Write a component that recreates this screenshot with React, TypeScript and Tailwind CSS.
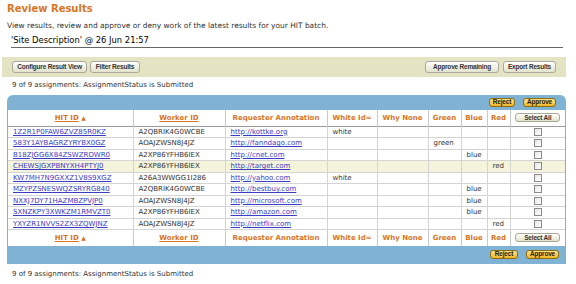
import React from 'react';

const font = { fontFamily: '"DejaVu Sans", Verdana, sans-serif' };
const btnFont = { fontFamily: '"Liberation Sans", Arial, sans-serif' };

type Row = {
  hit: string;
  worker: string;
  url: string;
  white?: string;
  green?: string;
  blue?: string;
  red?: string;
  hl?: boolean;
};

const rows: Row[] = [
  { hit: '1Z2R1P0FAW6ZVZ85R0KZ', worker: 'A2QBRIK4G0WCBE', url: 'http://kottke.org', white: 'white' },
  { hit: '583Y1AYBAGRZYRYBX0GZ', worker: 'AOAJZWSN8J4JZ', url: 'http://fanndago.com', green: 'green' },
  { hit: 'B18ZJGG6X84ZSWZRDWR0', worker: 'A2XP86YFHB6IEX', url: 'http://cnet.com', blue: 'blue' },
  { hit: 'CHEWSJGXPBNYXH4PTYJ0', worker: 'A2XP86YFHB6IEX', url: 'http://target.com', red: 'red', hl: true },
  { hit: 'KW7MH7N9GXXZ1V8S9XGZ', worker: 'A26A3WWGG1I286', url: 'http://yahoo.com', white: 'white' },
  { hit: 'MZYPZSNESWQZSRYRG840', worker: 'A2QBRIK4G0WCBE', url: 'http://bestbuy.com', blue: 'blue' },
  { hit: 'NXXJ7DY71HAZMBZPVJP0', worker: 'AOAJZWSN8J4JZ', url: 'http://microsoft.com', blue: 'blue' },
  { hit: 'SXNZKPY3XWKZM1RMVZT0', worker: 'A2XP86YFHB6IEX', url: 'http://amazon.com', blue: 'blue' },
  { hit: 'YXYZR1NVVS2ZX3ZQWJNZ', worker: 'AOAJZWSN8J4JZ', url: 'http://netflix.com', red: 'red' },
];

function GrayButton({ children, className = '' }: { children: React.ReactNode; className?: string }) {
  return (
    <span
      style={btnFont}
      className={`flex items-center justify-center whitespace-nowrap tracking-[-0.2px] rounded-[3px] border border-[#a9a99a] bg-gradient-to-b from-white to-[#e2e2cc] font-bold text-[#333] ${className}`}
    >
      {children}
    </span>
  );
}

function GoldButton({ children, className = '' }: { children: React.ReactNode; className?: string }) {
  return (
    <span
      style={btnFont}
      className={`flex items-center justify-center whitespace-nowrap tracking-[-0.2px] rounded-[3px] border border-[#8c6d10] bg-gradient-to-b from-[#ffe58a] to-[#eeb520] font-bold text-[#2a2000] text-[6.5px] leading-none ${className}`}
    >
      {children}
    </span>
  );
}

function HeaderRow({ top }: { top?: boolean }) {
  const th = 'border-r border-[#c9c9c9] text-center font-bold text-[#d9751f] text-[7px] p-0';
  return (
    <tr className={`h-[16px] bg-white ${top ? 'border-b border-[#9a9a9a]' : 'border-t border-[#9a9a9a]'}`}>
      <th className={th}><span className="underline">HIT ID</span> <span className="text-[6px]">▲</span></th>
      <th className={th}><span className="underline">Worker ID</span></th>
      <th className={th}>Requester Annotation</th>
      <th className={th}>White Id=</th>
      <th className={th}>Why None</th>
      <th className={th}>Green</th>
      <th className={th}>Blue</th>
      <th className={th}>Red</th>
      <th className="p-0">
        <GrayButton className="mx-auto h-[9px] w-[45px] text-[6.5px] leading-none">Select All</GrayButton>
      </th>
    </tr>
  );
}

export default function App() {
  const td = 'border-r border-[#d4d4d4] px-[5px] p-0 text-[7px] leading-[10px] text-[#333] whitespace-nowrap overflow-hidden';
  return (
    <div style={font} className="w-[576px] h-[284px] overflow-hidden bg-white text-[#333]">
      <div className="pl-[7px] pt-[2px] text-[10px] leading-[13px] font-bold text-[#d9751f]">Review Results</div>
      <div className="pl-[7px] mt-[6px] text-[7.45px] leading-[9px]">
        View results, review and approve or deny work of the latest results for your HIT batch.
      </div>
      <div className="ml-[11px] mr-[13px] mt-[4px] border-b border-[#666] text-[8.4px] leading-[12px] text-black pb-[1px]">
        'Site Description' @ 26 Jun 21:57
      </div>
      <div className="mx-[2px] mt-[9px] mr-[10px] h-[20px] bg-[#e4e4c4] flex items-center justify-between px-[10px]">
        <div className="flex gap-[3px]">
          <GrayButton className="h-[12px] w-[75px] text-[6.5px] leading-none">Configure Result View</GrayButton>
          <GrayButton className="h-[12px] w-[50px] text-[6.5px] leading-none">Filter Results</GrayButton>
        </div>
        <div className="flex gap-[4px]">
          <GrayButton className="h-[12px] w-[74px] text-[6.5px] leading-none">Approve Remaining</GrayButton>
          <GrayButton className="h-[12px] w-[53px] text-[6.5px] leading-none">Export Results</GrayButton>
        </div>
      </div>
      <div className="pl-[12px] mt-[4px] text-[7px] leading-[9px]">9 of 9 assignments: AssignmentStatus is Submitted</div>

      <div className="ml-[7px] mt-[5px] w-[559px] rounded-t-[6px] bg-[#80b3d3] px-[1px]">
        <div className="h-[15px] flex items-center justify-end gap-[8px] pr-[9px]">
          <GoldButton className="h-[9px] w-[26px]">Reject</GoldButton>
          <GoldButton className="h-[9px] w-[33px]">Approve</GoldButton>
        </div>
        <table className="w-full table-fixed border-collapse bg-white">
          <colgroup>
            <col className="w-[125px]" />
            <col className="w-[92px]" />
            <col className="w-[102px]" />
            <col className="w-[50px]" />
            <col className="w-[51px]" />
            <col className="w-[33px]" />
            <col className="w-[26px]" />
            <col className="w-[23px]" />
            <col className="w-[55px]" />
          </colgroup>
          <thead>
            <HeaderRow top />
          </thead>
          <tbody>
            {rows.map((r) => (
              <tr key={r.hit} className={`h-[11.5px] border-b border-[#d4d4d4] ${r.hl ? 'bg-[#f4f4dc]' : ''}`}>
                <td className={td}><a className="text-[#3b3bc4] underline">{r.hit}</a></td>
                <td className={td}>{r.worker}</td>
                <td className={td}><a className="text-[#3b3bc4] underline">{r.url}</a></td>
                <td className={td}>{r.white}</td>
                <td className={td}></td>
                <td className={td}>{r.green}</td>
                <td className={td}>{r.blue}</td>
                <td className={td}>{r.red}</td>
                <td className="p-0">
                  <span className="mx-auto block h-[8px] w-[8px] border border-[#8a8a8a] bg-gradient-to-br from-[#e6e6e6] to-white" />
                </td>
              </tr>
            ))}
          </tbody>
          <tfoot>
            <HeaderRow />
          </tfoot>
        </table>
        <div className="h-[18px] flex items-center justify-end gap-[8px] pr-[6px]">
          <GoldButton className="h-[9px] w-[28px]">Reject</GoldButton>
          <GoldButton className="h-[9px] w-[33px]">Approve</GoldButton>
        </div>
      </div>
      <div className="pl-[12px] mt-[6px] text-[7px] leading-[9px]">9 of 9 assignments: AssignmentStatus is Submitted</div>
    </div>
  );
}
